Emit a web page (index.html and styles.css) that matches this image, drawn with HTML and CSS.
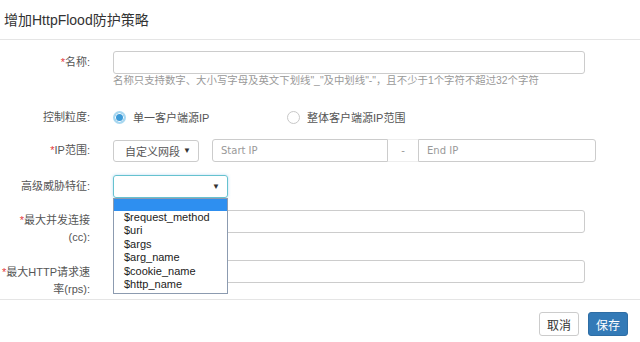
FILE: index.html
```html
<!DOCTYPE html>
<html lang="zh-CN">
<head>
<meta charset="UTF-8">
<title>增加HttpFlood防护策略</title>
<link rel="stylesheet" href="styles.css">
</head>
<body>
<div class="dialog">
    <div class="dialog-header">
        <h4>增加HttpFlood防护策略</h4>
    </div>
    <form class="dialog-body">
        <div class="row row-name">
            <label class="control-label"><span><span class="req">*</span>名称:</span></label>
            <div>
                <input type="text" class="form-control">
                <p class="help">名称只支持数字、大小写字母及英文下划线"_"及中划线"-"，且不少于1个字符不超过32个字符</p>
            </div>
        </div>
        <div class="row row-radio">
            <label class="control-label"><span>控制粒度:</span></label>
            <div class="radios">
                <span class="radio"><i class="dot checked"></i>单一客户端源IP</span>
                <span class="radio"><i class="dot"></i>整体客户端源IP范围</span>
            </div>
        </div>
        <div class="row row-ip">
            <label class="control-label"><span><span class="req">*</span>IP范围:</span></label>
            <div class="ip-group">
                <div class="select select-type">自定义网段<span class="caret">▼</span></div>
                <input type="text" class="form-control ip-start" placeholder="Start IP">
                <span class="addon">-</span>
                <input type="text" class="form-control ip-end" placeholder="End IP">
            </div>
        </div>
        <div class="row row-threat">
            <label class="control-label"><span>高级威胁特征:</span></label>
            <div class="select-wrap">
                <div class="select select-focus"><span class="caret">▼</span></div>
                <ul class="options">
                    <li class="active"></li>
                    <li>$request_method</li>
                    <li>$uri</li>
                    <li>$args</li>
                    <li>$arg_name</li>
                    <li>$cookie_name</li>
                    <li>$http_name</li>
                </ul>
            </div>
        </div>
        <div class="row row-cc">
            <label class="control-label"><span><span class="req">*</span>最大并发连接</span><span>(cc):</span></label>
            <input type="text" class="form-control">
        </div>
        <div class="row row-rps">
            <label class="control-label"><span><span class="req">*</span>最大HTTP请求速</span><span>率(rps):</span></label>
            <input type="text" class="form-control">
        </div>
    </form>
    <div class="dialog-footer">
        <button class="btn">取消</button>
        <button class="btn btn-primary">保存</button>
    </div>
</div>
</body>
</html>
```

FILE: styles.css
```css
body {
    margin: 0;
    background: #fff;
    font-family: "Liberation Sans", "Noto Sans CJK SC", sans-serif;
    font-size: 11px;
    color: #555;
}
.dialog {
    width: 640px;
    height: 342px;
}
.dialog-header {
    height: 40px;
    border-bottom: 1px solid #e5e5e5;
    box-sizing: border-box;
    padding-left: 4px;
}
.dialog-header h4 {
    margin: 0;
    font-size: 14px;
    font-weight: normal;
    line-height: 40px;
    color: #333;
}
.dialog-body {
    height: 259px;
    margin: 0;
    padding-top: 11px;
    box-sizing: border-box;
}
.row {
    display: grid;
    grid-template-columns: 86px 1fr;
    column-gap: 23px;
    padding-left: 4px;
    align-items: center;
}
.control-label {
    display: flex;
    flex-direction: column;
    align-items: flex-end;
    line-height: 17px;
    white-space: nowrap;
}
.req {
    color: #e4393c;
}
.form-control {
    display: block;
    box-sizing: border-box;
    height: 23px;
    width: 472px;
    padding: 0 8px;
    border: 1px solid #ccc;
    border-radius: 3px;
    font-family: "DejaVu Sans", "Noto Sans CJK SC", sans-serif;
    font-size: 10px;
    color: #555;
    outline: none;
}
.form-control::placeholder {
    color: #999;
}
.row-name {
    align-items: start;
}
.row-name .control-label {
    line-height: 23px;
}
.help {
    margin: 0;
    line-height: 14px;
    font-size: 10.4px;
    color: #999;
}
.row-radio {
    margin-top: 21px;
}
.radios {
    display: flex;
    line-height: 14px;
}
.radio {
    display: flex;
    align-items: center;
    width: 174px;
    color: #555;
}
.dot {
    box-sizing: border-box;
    width: 13px;
    height: 13px;
    border: 1px solid #c8c8c8;
    border-radius: 50%;
    margin-right: 7px;
}
.dot.checked {
    border: 2px solid #a9d8f0;
    background: #3d9bd8;
    box-shadow: inset 0 0 0 1px #fff;
}
.row-ip {
    margin-top: 13px;
}
.ip-group {
    display: flex;
    align-items: center;
}
.select {
    box-sizing: border-box;
    height: 22px;
    border: 1px solid #ccc;
    border-radius: 3px;
    display: flex;
    align-items: center;
    padding-left: 11px;
    color: #555;
    position: relative;
}
.caret {
    position: absolute;
    right: 7px;
    font-size: 8px;
    color: #333;
}
.select-type {
    width: 86px;
}
.ip-start {
    width: 176px;
    margin-left: 13px;
    border-radius: 3px 0 0 3px;
}
.addon {
    box-sizing: border-box;
    width: 30px;
    height: 23px;
    line-height: 21px;
    text-align: center;
    border-top: 1px solid #eee;
    border-bottom: 1px solid #eee;
    background: #fff;
    color: #999;
}
.ip-end {
    width: 178px;
    border-radius: 0 3px 3px 0;
}
.row-threat {
    margin-top: 13px;
    position: relative;
    z-index: 2;
}
.select-wrap {
    position: relative;
    width: 115px;
}
.select-focus {
    height: 23px;
    border-color: #66c2cf;
    box-shadow: 0 0 3px rgba(102, 175, 233, 0.5);
}
.options {
    position: absolute;
    top: 23px;
    left: 0;
    width: 115px;
    box-sizing: border-box;
    margin: 0;
    padding: 0 0 2px;
    list-style: none;
    background: #fff;
    border: 1px solid #8c9bb0;
    font-family: "Liberation Sans", sans-serif;
    font-size: 11px;
    color: #222;
}
.options li {
    height: 13.4px;
    line-height: 13.4px;
    padding-left: 10px;
}
.options li.active {
    background: #2e8ff0;
    height: 12px;
}
.row-cc {
    margin-top: 12px;
    align-items: start;
}
.row-cc .control-label {
    margin-top: 2px;
}
.row-rps {
    margin-top: 14px;
    align-items: start;
}
.row-rps .control-label {
    margin-top: 4px;
}
.dialog-footer {
    border-top: 1px solid #e5e5e5;
    height: 43px;
    display: flex;
    justify-content: flex-end;
    align-items: flex-start;
    gap: 9px;
    padding: 12px 12px 0 0;
    box-sizing: border-box;
}
.btn {
    height: 24px;
    padding: 0 7px;
    border: 1px solid #ccc;
    border-radius: 3px;
    background: #fff;
    font-family: "Liberation Sans", "Noto Sans CJK SC", sans-serif;
    font-size: 12px;
    color: #333;
}
.btn-primary {
    background: #337ab7;
    border-color: #2e6da4;
    color: #fff;
}
```
